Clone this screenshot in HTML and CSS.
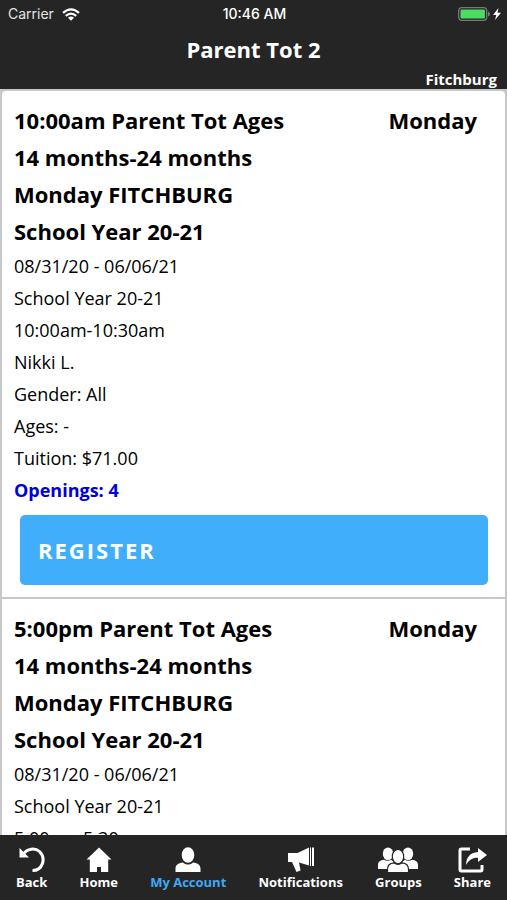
FILE: index.html
```html
<!DOCTYPE html>
<html lang="en">
<head>
<meta charset="utf-8">
<meta name="viewport" content="width=device-width, initial-scale=1">
<title>Parent Tot 2</title>
<link rel="stylesheet" href="styles.css">
</head>
<body>
<header class="header">
  <div class="status">
    <span class="status-left">Carrier
      <svg class="wifi" viewBox="0 0 18 13" aria-hidden="true"><g fill="none" stroke="currentColor" stroke-width="2.2"><path d="M1 4.8Q9-2.200 17 4.800"/><path d="M3.800 7.900Q9 3.200 14.200 7.900"/></g><path d="M6 9.800Q9 7.400 12 9.800L9 12.800Z" fill="currentColor"/></svg>
    </span>
    <span class="clock">10:46 AM</span>
    <span class="status-right">
      <svg class="battery" viewBox="0 0 43 14" aria-hidden="true"><rect x=".7" y=".7" width="28" height="12.600" rx="3" fill="none" stroke="#77797a" stroke-width="1.300"/><rect x="2.500" y="2.500" width="24.400" height="9" rx="1.200" fill="#4cdc64"/><path d="M30 4.500q2 .5 2 2.500t-2 2.500z" fill="#77797a"/><path d="M40.500 1L35 8h3.300L37 13l6-7.200h-3.500z" fill="#fff"/></svg>
    </span>
  </div>
  <h1 class="title">Parent Tot 2</h1>
  <p class="location">Fitchburg</p>
</header>

<main class="classes">
  <article class="class-card">
    <div class="class-head">
      <h2 class="class-name">10:00am Parent Tot Ages 14 months-24 months Monday FITCHBURG School Year 20-21</h2>
      <span class="day">Monday</span>
    </div>
    <ul class="details">
      <li>08/31/20 - 06/06/21</li>
      <li>School Year 20-21</li>
      <li>10:00am-10:30am</li>
      <li>Nikki L.</li>
      <li>Gender: All</li>
      <li>Ages: -</li>
      <li>Tuition: $71.00</li>
      <li class="openings">Openings: 4</li>
    </ul>
    <button class="register" type="button">REGISTER</button>
  </article>
  <article class="class-card">
    <div class="class-head">
      <h2 class="class-name">5:00pm Parent Tot Ages 14 months-24 months Monday FITCHBURG School Year 20-21</h2>
      <span class="day">Monday</span>
    </div>
    <ul class="details">
      <li>08/31/20 - 06/06/21</li>
      <li>School Year 20-21</li>
      <li>5:00pm-5:30pm</li>
    </ul>
  </article>
</main>

<nav class="tabs">
  <a class="tab" href="#back"><svg class="icon" viewBox="0 0 26 26" aria-hidden="true"><path d="M4.500 7C8 1.500 16 .5 20.500 4.500c7 7 3 19-7 19" fill="none" stroke="currentColor" stroke-width="3"/><path d="M.5 1v9.500H10z" fill="currentColor"/></svg>Back</a>
  <a class="tab" href="#home"><svg class="icon" viewBox="0 0 26 26" aria-hidden="true"><path d="M13 .5L.5 12.500h3.300V25h7.200v-5h4v5h7.200V12.500h3.300z" fill="currentColor"/></svg>Home</a>
  <a class="tab active" href="#account"><svg class="icon" viewBox="0 0 26 26" aria-hidden="true"><ellipse cx="13" cy="8" rx="6.300" ry="7.700" fill="#fff"/><path d="M.5 25v-3c0-4 2.500-6 7.500-6.500 3 2.700 7 2.700 10 0 5 .5 7.500 2.500 7.500 6.500v3z" fill="#fff"/></svg>My Account</a>
  <a class="tab" href="#notifications"><svg class="icon" viewBox="0 0 26 26" aria-hidden="true"><path d="M0 6h9.500L21 .5v18L11 15.500l1.500 8-4 1.500L4 15H0zM22 .5h1v18.500h-1zM24 .5h2v18.500h-2z" fill="currentColor"/></svg>Notifications</a>
  <a class="tab" href="#groups"><svg class="icon icon-wide" viewBox="0 0 40 26" aria-hidden="true"><g fill="currentColor"><ellipse cx="10" cy="6.700" rx="5.200" ry="6.300"/><ellipse cx="30" cy="6.700" rx="5.200" ry="6.300"/><path d="M0 22v-4c0-3.300 2.500-5 6-5.300 2 1.500 5 1.500 7 0L16 15l-5 7zM40 22v-4c0-3.300-2.500-5-6-5.300-2 1.500-5 1.500-7 0L24 15l5 7z"/></g><g fill="currentColor" stroke="#252525" stroke-width="1.200"><path d="M9.500 25.600V22c0-3.500 2-5.700 6.500-6.200 2.500 2 5.500 2 8 0 4.500.5 6.500 2.700 6.500 6.200v3.600z"/><ellipse cx="20" cy="9.500" rx="5.700" ry="7.200"/></g></svg>Groups</a>
  <a class="tab" href="#share"><svg class="icon icon-share" viewBox="0 0 29 26" aria-hidden="true"><path d="M12 2H3.500Q2 2 2 3.500v19Q2 24 3.500 24h19q1.500 0 1.500-1.500V18" fill="none" stroke="currentColor" stroke-width="3"/><path d="M20 1l9 7-9 7v-4.200c-5-.3-9 2.200-12 7.200 0-7.500 4-12.500 12-13z" fill="currentColor"/></svg>Share</a>
</nav>
</body>
</html>
```
FILE: styles.css
```css
* {
  box-sizing: border-box;
}

body {
  margin: 0;
  height: 100vh;
  display: flex;
  flex-direction: column;
  background: #252525;
  color: #000;
  font-family: "Open Sans", sans-serif;
}

h1, h2, p, ul {
  margin: 0;
  padding: 0;
}

.header {
  flex: none;
  color: #fff;
}

.status {
  display: grid;
  grid-template-columns: 1fr auto 1fr;
  align-items: center;
  height: 28px;
  padding: 0 6px 0 8px;
  font: 14px/28px Inter, sans-serif;
}

.status-left {
  display: flex;
  align-items: center;
  gap: 8px;
  color: #e4e4e4;
}

.clock {
  font-weight: 500;
}

.status-right {
  display: flex;
  justify-content: flex-end;
}

.wifi {
  width: 18px;
  height: 13px;
  color: #fff;
}

.battery {
  width: 43px;
  height: 14px;
}

.title {
  font-size: 22px;
  line-height: 43px;
  text-align: center;
}

.location {
  padding: 0 10px 2px 0;
  font-size: 15px;
  font-weight: 700;
  line-height: 16px;
  text-align: right;
}

.classes {
  flex: 1;
  min-height: 0;
  overflow: hidden;
  background: #c8c8c8;
}

.class-card {
  padding: 11px 17px 12px 12px;
  border: 2px solid #c8c8c8;
  border-bottom-width: 0;
  border-radius: 6px 6px 0 0;
  background: #fff;
}

.class-card + .class-card {
  border-radius: 0;
}

.class-head {
  display: flex;
  justify-content: space-between;
  padding-right: 11px;
  font-size: 22px;
  font-weight: 700;
  line-height: 37px;
}

.class-name {
  flex: 0 1 280px;
  font-size: 22px;
}

.details {
  list-style: none;
  font-size: 18px;
  line-height: 32px;
}

.openings {
  color: #00d;
  font-weight: 700;
}

.register {
  display: block;
  width: calc(100% - 6px);
  height: 70px;
  margin: 9px 0 0 6px;
  padding: 0 18px;
  border: 0;
  border-radius: 5px;
  background: #41aefc;
  color: #fff;
  font: 700 22px "Open Sans", sans-serif;
  letter-spacing: 2px;
  text-align: left;
}

.tabs {
  flex: none;
  display: flex;
  justify-content: space-between;
  height: 65px;
  padding: 12px 16px 0;
}

.tab {
  display: flex;
  flex-direction: column;
  align-items: center;
  color: #fff;
  font-size: 13px;
  font-weight: 700;
  line-height: 18px;
  text-decoration: none;
}

.active {
  color: #3fa9f5;
}

.icon {
  width: 26px;
  height: 26px;
}

.icon-wide {
  width: 40px;
}

.icon-share {
  width: 29px;
}
```
